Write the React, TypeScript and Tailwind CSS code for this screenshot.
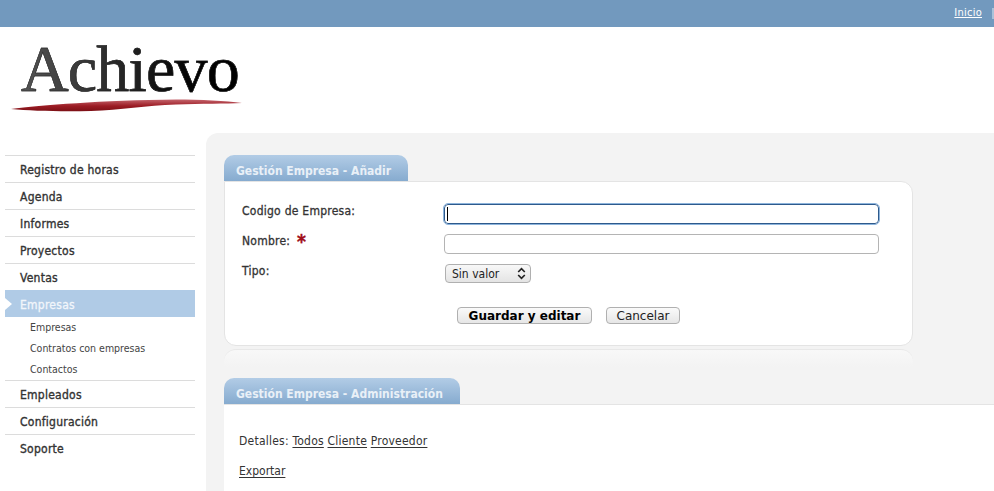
const font = "font-['DejaVu_Sans_Condensed','DejaVu_Sans',sans-serif] [font-stretch:condensed]";

const menuTop = ["Registro de horas", "Agenda", "Informes", "Proyectos", "Ventas"];
const menuBottom = ["Empleados", "Configuración", "Soporte"];
const subItems = ["Empresas", "Contratos con empresas", "Contactos"];

function MenuItem({ label }: { label: string }) {
  return (
    <div className="h-[27px] border-t border-[#dcdcdc] pl-[15px] pt-[2px] flex items-center text-[12px] tracking-[0.25px] [-webkit-text-stroke:0.35px_#333333] text-[#333333]">
      {label}
    </div>
  );
}

function Tab({ label, width }: { label: string; width: string }) {
  return (
    <div
      className={`${width} h-[26px] rounded-t-[10px] bg-gradient-to-b from-[#b2cce6] to-[#86abcf] pl-3 pt-[6px] flex items-center text-[12px] font-bold text-[#e9f0f7]`}
    >
      {label}
    </div>
  );
}

function Label({ children }: { children: React.ReactNode }) {
  return (
    <div className="w-[202px] shrink-0 -mt-px text-[12px] tracking-[0.25px] text-[#333333]">
      <span className="[-webkit-text-stroke:0.3px_#333333]">{children}</span>
    </div>
  );
}

export default function App() {
  return (
    <div className={`${font} w-[994px] h-[491px] overflow-hidden bg-white`}>
      <div className="h-[27px] bg-[#7299be] flex justify-end items-center gap-[10px] text-[11px] tracking-[0.25px] text-white">
        <a className="underline underline-offset-1 leading-none pb-[2px]">Inicio</a>
        <span className="w-[2px] h-[11px] bg-[#a9c2da]" />
      </div>

      <div className="h-[106px] pl-[11px] pt-[7px]">
        <div className="w-[232px] flex flex-col items-start">
          <div className="font-['Liberation_Serif',serif] [font-stretch:normal] text-[66px] leading-[70px] h-[64px] ml-[10px] tracking-[-0.8px] bg-gradient-to-r from-[#555555] via-[#222222] to-black bg-clip-text text-transparent [-webkit-text-stroke:0.5px_#222222]">
            Achievo
          </div>
          <svg width="232" height="14" viewBox="0 0 232 14" className="block">
            <defs>
              <linearGradient id="swoosh" x1="0" y1="0" x2="0" y2="1">
                <stop offset="0" stopColor="#c4646c" />
                <stop offset="0.55" stopColor="#9c1c24" />
                <stop offset="1" stopColor="#7c1016" />
              </linearGradient>
            </defs>
            <path d="M0 11 C30 7.5 90 2 165 1.5 C190 1.5 215 3 231 5 C215 5.8 190 5.6 165 6.5 C135 7.6 110 12 80 13 C50 13.6 20 13 0 11 Z" fill="url(#swoosh)" />
          </svg>
        </div>
      </div>

      <div className="flex">
        <nav className="w-[190px] ml-[5px] mr-[11px] pt-[22px] shrink-0">
          {menuTop.map((m) => (
            <MenuItem key={m} label={m} />
          ))}
          <div className="relative h-[27px] bg-[#b0cbe6] pl-[15px] pt-[2px] flex items-center text-[12px] tracking-[0.25px] [-webkit-text-stroke:0.3px_#f2f6fb] text-[#f2f6fb]">
            <span className="absolute left-0 top-[8px] border-y-[6px] border-l-[7px] border-y-transparent border-l-white" />
            Empresas
          </div>
          <div>
            {subItems.map((s) => (
              <div key={s} className="h-[21px] pl-[25px] flex items-center text-[10.5px] text-[#444444]">
                {s}
              </div>
            ))}
          </div>
          {menuBottom.map((m) => (
            <MenuItem key={m} label={m} />
          ))}
        </nav>

        <main className="flex-1 h-[358px] bg-[#f3f3f3] rounded-tl-[12px] pl-[18px] pt-[22px] overflow-hidden">
          <Tab label="Gestión Empresa - Añadir" width="w-[184px]" />
          <div className="w-[689px] h-[165px] bg-white border border-[#e4e4e4] rounded-tr-[12px] rounded-b-[12px] pl-[17px] pr-[33px] pt-[21px]">
            <div className="flex items-start h-[30px]">
              <Label>Codigo de Empresa:</Label>
              <div className="relative mt-[1px]">
                <input className="block w-[435px] h-[20px] rounded-[4px] border border-[#2f5a8c] outline outline-1 outline-[#8db4dc] bg-white" />
                <span className="absolute left-[3px] top-[3px] w-px h-[14px] bg-black" />
              </div>
            </div>
            <div className="flex items-start h-[30px]">
              <Label>
                Nombre:{" "}
                <span className="relative top-[3px] ml-[3px] text-[#a00f18] text-[19px] font-bold leading-[10px] [-webkit-text-stroke:0.4px_#a00f18]">*</span>
              </Label>
              <input className="block w-[435px] h-[20px] rounded-[4px] border border-[#b4b4b4] bg-white mt-[1px]" />
            </div>
            <div className="flex items-start">
              <Label>Tipo:</Label>
              <div className="ml-px w-[86px] h-[19px] mt-[1px] rounded-[4px] border border-[#b0b0b0] bg-gradient-to-b from-[#f8f8f8] to-[#e4e4e4] flex items-center justify-between pl-[6px] pr-[4px] text-[12px] text-[#222222]">
                Sin valor
                <svg width="9" height="13" viewBox="0 0 9 13" fill="none" stroke="#222222" strokeWidth="1.7">
                  <path d="M1.2 5 L4.5 1.7 L7.8 5" />
                  <path d="M1.2 8 L4.5 11.3 L7.8 8" />
                </svg>
              </div>
            </div>
            <div className="flex gap-[14px] mt-[24px] ml-[215px]">
              <button className="w-[135px] h-[17px] rounded-[4px] border border-[#b0b0b0] bg-gradient-to-b from-[#fafafa] to-[#e6e6e6] font-['DejaVu_Sans',sans-serif] [font-stretch:normal] text-[12px] font-bold text-black flex items-center justify-center">
                Guardar y editar
              </button>
              <button className="w-[74px] h-[17px] rounded-[4px] border border-[#b0b0b0] bg-gradient-to-b from-[#fafafa] to-[#e6e6e6] font-['DejaVu_Sans',sans-serif] [font-stretch:normal] text-[12px] text-[#222222] flex items-center justify-center">
                Cancelar
              </button>
            </div>
          </div>
          <div className="w-[689px] h-[18px] mt-[3px] mb-[11px] rounded-t-[12px] border-t border-[#e8e8e8] bg-gradient-to-b from-[#f8f8f8] to-[#f3f3f3]" />
          <Tab label="Gestión Empresa - Administración" width="w-[236px]" />
          <div className="bg-white border-t border-[#e4e4e4] pl-[15px] pt-[28px] h-[100px] text-[12px] tracking-[0.23px] text-[#333333]">
            <div className="leading-[16px]">
              Detalles: <a className="underline underline-offset-2">Todos</a>{" "}
              <a className="underline underline-offset-2">Cliente</a>{" "}
              <a className="underline underline-offset-2">Proveedor</a>
            </div>
            <div className="mt-[14px] leading-[16px] tracking-normal">
              <a className="underline underline-offset-2">Exportar</a>
            </div>
          </div>
        </main>
      </div>
    </div>
  );
}
